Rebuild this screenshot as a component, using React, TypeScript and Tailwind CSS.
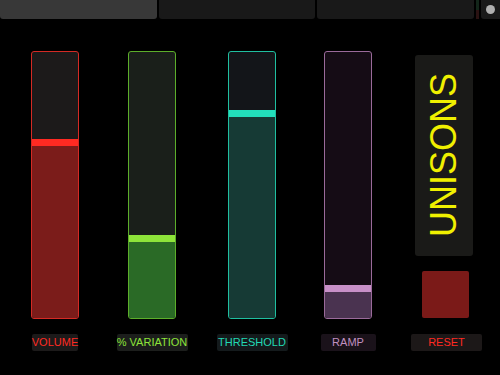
import React from 'react';

// One fader channel: colours are written out so Tailwind picks them up
interface Fader {
  label: string;
  level: number; // px from inner bottom to top of thumb
  col: string; // column placement
  box: string;
  thumb: string;
  fill: string;
  labelBox: string;
}

const faders: Fader[] = [
  {
    label: 'VOLUME',
    level: 172,
    col: 'ml-[31px]',
    box: 'border-[#d42a24] bg-[#1c1a1a]',
    thumb: 'bg-[#ff2a22]',
    fill: 'bg-[#7b1c1a]',
    labelBox: 'w-[46px] bg-[#1c1a1a] text-[#ff2a22]',
  },
  {
    label: '% VARIATION',
    level: 76,
    col: 'ml-[49px]',
    box: 'border-[#5cae2a] bg-[#1a1f1a]',
    thumb: 'bg-[#8ee43a]',
    fill: 'bg-[#2a6a26]',
    labelBox: 'w-[71px] bg-[#1c1e1c] text-[#8ee43a]',
  },
  {
    label: 'THRESHOLD',
    level: 201,
    col: 'ml-[52px]',
    box: 'border-[#1fbfa0] bg-[#131519]',
    thumb: 'bg-[#22e0bc]',
    fill: 'bg-[#163a35]',
    labelBox: 'w-[71px] bg-[#141a1c] text-[#22d8b4]',
  },
  {
    label: 'RAMP',
    level: 26,
    col: 'ml-[48px]',
    box: 'border-[#9a6a9a] bg-[#150c15]',
    thumb: 'bg-[#c890c8]',
    fill: 'bg-[#4a3350]',
    labelBox: 'w-[55px] bg-[#1a121a] text-[#c090c0]',
  },
];

const App = () => {
  return (
    <div className="w-[500px] h-[375px] bg-black overflow-hidden font-['Liberation_Sans',Arial,sans-serif]">
      {/* top tab strip */}
      <div className="flex h-[19px] gap-[2px]">
        <div className="w-[157px] rounded-b-[3px] bg-[#383838]" />
        <div className="w-[156px] rounded-b-[3px] bg-[#191919]" />
        <div className="w-[157px] rounded-b-[3px] bg-[#191919]" />
        <div className="flex w-[3px] flex-col">
          <div className="flex-1 bg-[#13261a]" />
          <div className="flex-1 bg-[#2a1212]" />
        </div>
        <div className="flex flex-1 items-center justify-center rounded-bl-[3px] bg-[#1a1a1a]">
          <div className="h-[9px] w-[9px] rounded-full bg-[#b0b0b0]" />
        </div>
      </div>

      <div className="flex pt-[32px]">
        {faders.map((f) => (
          <div key={f.label} className={`flex w-[48px] flex-col items-center ${f.col}`}>
            <div className={`flex h-[268px] w-[48px] flex-col overflow-hidden rounded-[3px] border ${f.box}`}>
              <div className="flex-1" />
              <div className={`h-[7px] ${f.thumb}`} />
              <div className={f.fill} style={{ height: f.level }} />
            </div>
            <div
              className={`mt-[15px] flex h-[17px] shrink-0 items-center justify-center rounded-[2px] text-[11px] ${f.labelBox}`}
            >
              {f.label}
            </div>
          </div>
        ))}

        {/* unisons toggle and reset */}
        <div className="ml-[39px] flex w-[71px] flex-col">
          <div className="ml-[4px] mt-[4px] flex h-[201px] w-[58px] items-center justify-center rounded-[3px] bg-[#1a1a18]">
            <span className="rotate-180 text-[36px] leading-none text-[#f0f000] [writing-mode:vertical-rl]">
              UNISONS
            </span>
          </div>
          <div className="ml-[11px] mt-[15px] h-[47px] w-[47px] rounded-[2px] bg-[#7b1a18]" />
          <div className="mt-[16px] flex h-[17px] w-[71px] items-center justify-center rounded-[2px] bg-[#1c1818] text-[11px] text-[#ff2a22]">
            RESET
          </div>
        </div>
      </div>
    </div>
  );
};

export default App;
